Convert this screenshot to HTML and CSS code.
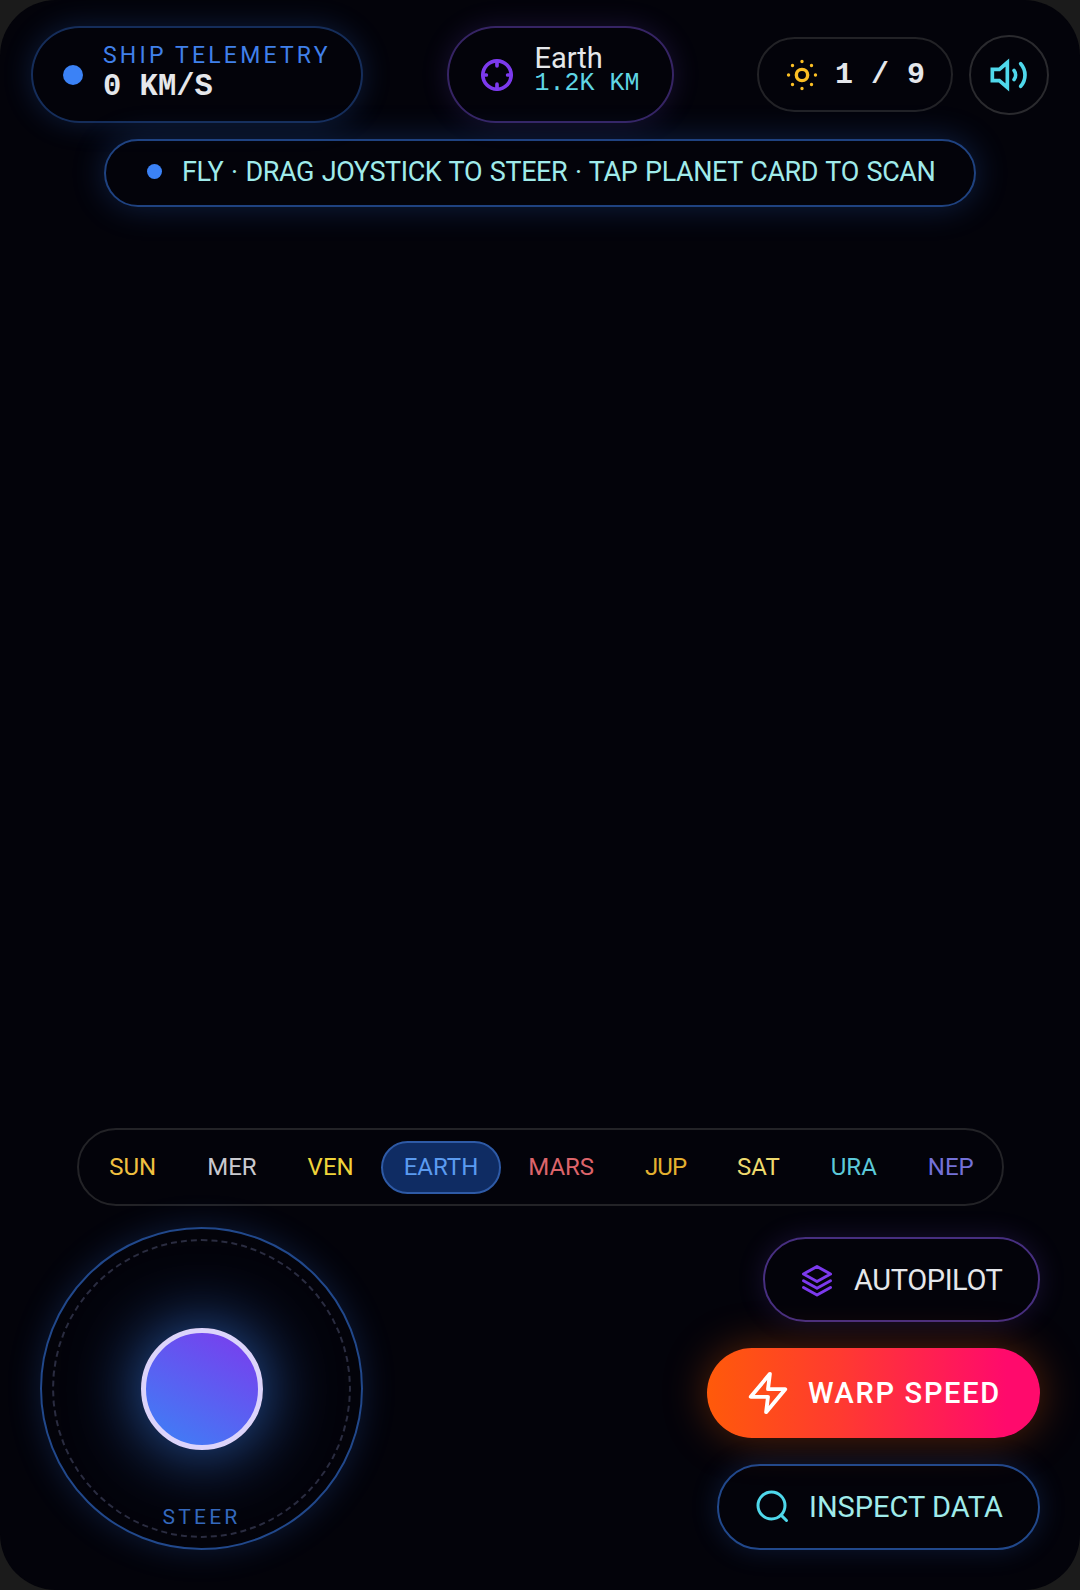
FILE: index.html
```html
<!DOCTYPE html>
<html lang="en">

<head>
  <meta charset="UTF-8">
  <meta name="viewport" content="width=device-width, initial-scale=1.0">
  <title>Solar Flight</title>
  <link rel="stylesheet" href="styles.css">
</head>

<body>
  <div class="screen">
    <div class="top-bar">
      <div class="pill telemetry">
        <span class="dot dot-large"></span>
        <div class="telemetry-text">
          <div class="telemetry-label">SHIP TELEMETRY</div>
          <div class="telemetry-value">0 KM/S</div>
        </div>
      </div>

      <div class="pill target">
        <svg class="target-icon" viewBox="0 0 24 24" fill="none" stroke="currentColor" stroke-width="2.6" stroke-linecap="round" stroke-linejoin="round">
          <circle cx="12" cy="12" r="10"></circle>
          <path d="M12 2v3.5M12 18.5V22M2 12h2.5M19.5 12H22"></path>
        </svg>
        <div class="target-text">
          <div class="target-name">Earth</div>
          <div class="target-distance">1.2K KM</div>
        </div>
      </div>

      <div class="top-right">
        <div class="pill counter">
          <svg class="sun-icon" viewBox="0 0 24 24" fill="none" stroke="currentColor" stroke-width="2.4" stroke-linecap="round" stroke-linejoin="round">
            <circle cx="12" cy="12" r="4"></circle>
            <path d="M12 2.5v.01M12 21.5v.01M2.5 12h.01M21.5 12h.01M5.3 5.3h.01M18.7 5.3h.01M5.3 18.7h.01M18.7 18.7h.01"></path>
          </svg>
          <span class="counter-value">1 / 9</span>
        </div>
        <div class="sound-button">
          <svg class="sound-icon" viewBox="0 0 24 24" fill="none" stroke="currentColor" stroke-width="2.2" stroke-linejoin="miter">
            <path d="M11 4.5 6.2 8.6H2v6.8h4.2l4.8 4.1z"></path>
            <path d="M15 9.2a4.6 4.6 0 0 1 0 5.6" stroke-linecap="round"></path>
            <path d="M19 5.2a10.2 10.2 0 0 1 0 13.6" stroke-linecap="round"></path>
          </svg>
        </div>
      </div>
    </div>

    <div class="hint">
      <span class="dot"></span>
      <span>FLY · DRAG JOYSTICK TO STEER · TAP PLANET CARD TO SCAN</span>
    </div>

    <div class="spacer"></div>

    <div class="planet-bar">
      <span class="planet sun">SUN</span>
      <span class="planet mer">MER</span>
      <span class="planet ven">VEN</span>
      <span class="planet earth">EARTH</span>
      <span class="planet mars">MARS</span>
      <span class="planet jup">JUP</span>
      <span class="planet sat">SAT</span>
      <span class="planet ura">URA</span>
      <span class="planet nep">NEP</span>
    </div>

    <div class="controls">
      <div class="joystick">
        <div class="joystick-ring"></div>
        <div class="joystick-knob"></div>
        <div class="joystick-label">STEER</div>
      </div>

      <div class="actions">
        <div class="action autopilot">
          <svg class="action-icon" viewBox="0 0 24 24" fill="none" stroke="currentColor" stroke-width="2" stroke-linecap="round" stroke-linejoin="round">
            <path d="M12 3 3 8l9 5 9-5z"></path>
            <path d="m3 12.5 9 5 9-5"></path>
            <path d="m3 17 9 5 9-5"></path>
          </svg>
          <span>AUTOPILOT</span>
        </div>
        <div class="action warp">
          <svg class="action-icon warp-icon" viewBox="0 0 24 24" fill="none" stroke="currentColor" stroke-width="2" stroke-linecap="round" stroke-linejoin="round">
            <path d="M13 2 3 14h9l-1 8 10-12h-9z"></path>
          </svg>
          <span>WARP SPEED</span>
        </div>
        <div class="action inspect">
          <svg class="action-icon" viewBox="0 0 24 24" fill="none" stroke="currentColor" stroke-width="2" stroke-linecap="round" stroke-linejoin="round">
            <circle cx="11" cy="11" r="9"></circle>
            <path d="m21 21-3.6-3.6"></path>
          </svg>
          <span>INSPECT DATA</span>
        </div>
      </div>
    </div>
  </div>
</body>

</html>
```

FILE: styles.css
```css
* {
  margin: 0;
  padding: 0;
  box-sizing: border-box;
}

body {
  width: 1080px;
  height: 1590px;
  overflow: hidden;
  background: #1b1b1b;
  font-family: 'Roboto', 'Liberation Sans', sans-serif;
}

.screen {
  width: 1080px;
  height: 1590px;
  border-radius: 56px;
  background: #03030a;
  display: flex;
  flex-direction: column;
}

.top-bar {
  display: flex;
  justify-content: space-between;
  align-items: center;
  padding: 26px 31px 0;
}

.top-right {
  display: flex;
  align-items: center;
  gap: 16px;
}

.pill {
  display: flex;
  align-items: center;
  border-radius: 50px;
  background: #03030a;
}

.dot {
  width: 15px;
  height: 15px;
  border-radius: 50%;
  background: #3b82f6;
  flex-shrink: 0;
}

.dot-large {
  width: 20px;
  height: 20px;
}

.telemetry {
  width: 332px;
  height: 97px;
  padding-left: 30px;
  gap: 20px;
  border: 2px solid rgba(59, 130, 246, 0.34);
  box-shadow: 0 0 30px rgba(59, 130, 246, 0.2);
}

.telemetry-text {
  padding-bottom: 8px;
}

.telemetry-label {
  font-size: 23px;
  line-height: 32px;
  letter-spacing: 3.2px;
  color: #4080ea;
}

.telemetry-value {
  font-family: 'Liberation Mono', monospace;
  font-weight: bold;
  font-size: 30.5px;
  line-height: 30px;
  color: #e5e7eb;
}

.target {
  width: 227px;
  height: 97px;
  padding-left: 31px;
  gap: 21px;
  border: 2px solid rgba(139, 92, 246, 0.38);
  box-shadow: 0 0 28px rgba(139, 92, 246, 0.16);
}

.target-icon {
  width: 34px;
  height: 34px;
  color: #7c3aed;
}

.target-text {
  padding-bottom: 9px;
}

.target-name {
  font-size: 29px;
  line-height: 28px;
  color: #e5e7eb;
}

.target-distance {
  font-family: 'Liberation Mono', monospace;
  font-size: 25px;
  line-height: 24px;
  color: #5fd6e4;
}

.counter {
  width: 196px;
  height: 75px;
  padding-left: 26px;
  gap: 16px;
  border: 2px solid #222226;
}

.sun-icon {
  width: 34px;
  height: 34px;
  color: #fbbf24;
}

.counter-value {
  font-family: 'Liberation Mono', monospace;
  font-weight: bold;
  font-size: 30px;
  color: #e5e7eb;
}

.sound-button {
  width: 80px;
  height: 80px;
  border-radius: 50%;
  border: 2px solid #2a2a2e;
  display: flex;
  align-items: center;
  justify-content: center;
}

.sound-icon {
  width: 40px;
  height: 40px;
  color: #4fd8eb;
}

.hint {
  align-self: center;
  width: 872px;
  height: 68px;
  margin-top: 16px;
  display: flex;
  align-items: center;
  gap: 20px;
  padding: 0 0 3px 41px;
  border-radius: 34px;
  border: 2px solid rgba(59, 130, 246, 0.5);
  box-shadow: 0 0 34px rgba(59, 130, 246, 0.24);
  font-size: 27px;
  letter-spacing: -0.42px;
  word-spacing: 1.5px;
  color: #a0ebea;
}

.spacer {
  flex: 1;
}

.planet-bar {
  align-self: center;
  width: 927px;
  height: 78px;
  display: flex;
  align-items: center;
  justify-content: center;
  gap: 3px;
  padding-left: 3px;
  border-radius: 39px;
  border: 2px solid #232327;
  font-size: 24px;
}

.planet {
  height: 53px;
  line-height: 49px;
  padding: 0 22px;
  border-radius: 27px;
  border: 2px solid transparent;
}

.sun { color: #f0c040; }
.mer { color: #c9c9cf; }
.ven { color: #f0d43a; }
.mars { color: #dc646a; }
.jup { color: #e3b030; letter-spacing: -1px; }
.sat { color: #eeda6e; }
.ura { color: #5cc9d9; }
.nep { color: #7471d8; }

.planet.earth {
  padding: 0 21px;
  background: #0f2c63;
  border-color: #2e5aa6;
  color: #5b9bf0;
}

.controls {
  display: flex;
  justify-content: space-between;
  align-items: flex-end;
  padding: 21px 40px 40px 40px;
}

.joystick {
  position: relative;
  width: 323px;
  height: 323px;
  border-radius: 50%;
  border: 2px solid rgba(59, 130, 246, 0.55);
  box-shadow: 0 0 34px rgba(59, 130, 246, 0.2);
  display: flex;
  align-items: center;
  justify-content: center;
}

.joystick-ring {
  position: absolute;
  top: 10px;
  left: 10px;
  right: 10px;
  bottom: 10px;
  border-radius: 50%;
  border: 2px dashed #2a2c40;
}

.joystick-knob {
  width: 122px;
  height: 122px;
  border-radius: 50%;
  border: 5px solid #dcd4fb;
  background: linear-gradient(210deg, #7c3aed, #3b82f6);
  box-shadow: 0 0 72px rgba(59, 130, 246, 0.75);
}

.joystick-label {
  position: absolute;
  left: 0;
  right: 0;
  bottom: 19px;
  text-align: center;
  font-size: 21px;
  letter-spacing: 3.2px;
  color: #3468bd;
}

.actions {
  display: flex;
  flex-direction: column;
  align-items: flex-end;
  gap: 26px;
}

.action {
  display: flex;
  align-items: center;
  border-radius: 50px;
  font-size: 29px;
}

.action-icon {
  width: 36px;
  height: 36px;
}

.autopilot {
  width: 277px;
  height: 85px;
  padding-left: 34px;
  gap: 19px;
  border: 2px solid rgba(139, 92, 246, 0.5);
  box-shadow: 0 0 28px rgba(139, 92, 246, 0.16);
  letter-spacing: -0.4px;
  color: #e5e7eb;
}

.autopilot .action-icon {
  color: #7c3aed;
}

.warp {
  width: 333px;
  height: 90px;
  padding-left: 38px;
  gap: 17px;
  background: linear-gradient(90deg, #ff5a0a 0%, #ff3a30 40%, #ff0a6c 90%);
  box-shadow: 0 0 44px rgba(255, 100, 10, 0.34);
  color: #fff;
  font-weight: 500;
  letter-spacing: 1.7px;
}

.warp-icon {
  width: 46px;
  height: 46px;
}

.inspect {
  width: 323px;
  height: 86px;
  padding-left: 36px;
  gap: 18px;
  border: 2px solid rgba(59, 130, 246, 0.55);
  box-shadow: 0 0 28px rgba(59, 130, 246, 0.18);
  color: #a0ebea;
}

.inspect .action-icon {
  color: #4fd8eb;
}
```
